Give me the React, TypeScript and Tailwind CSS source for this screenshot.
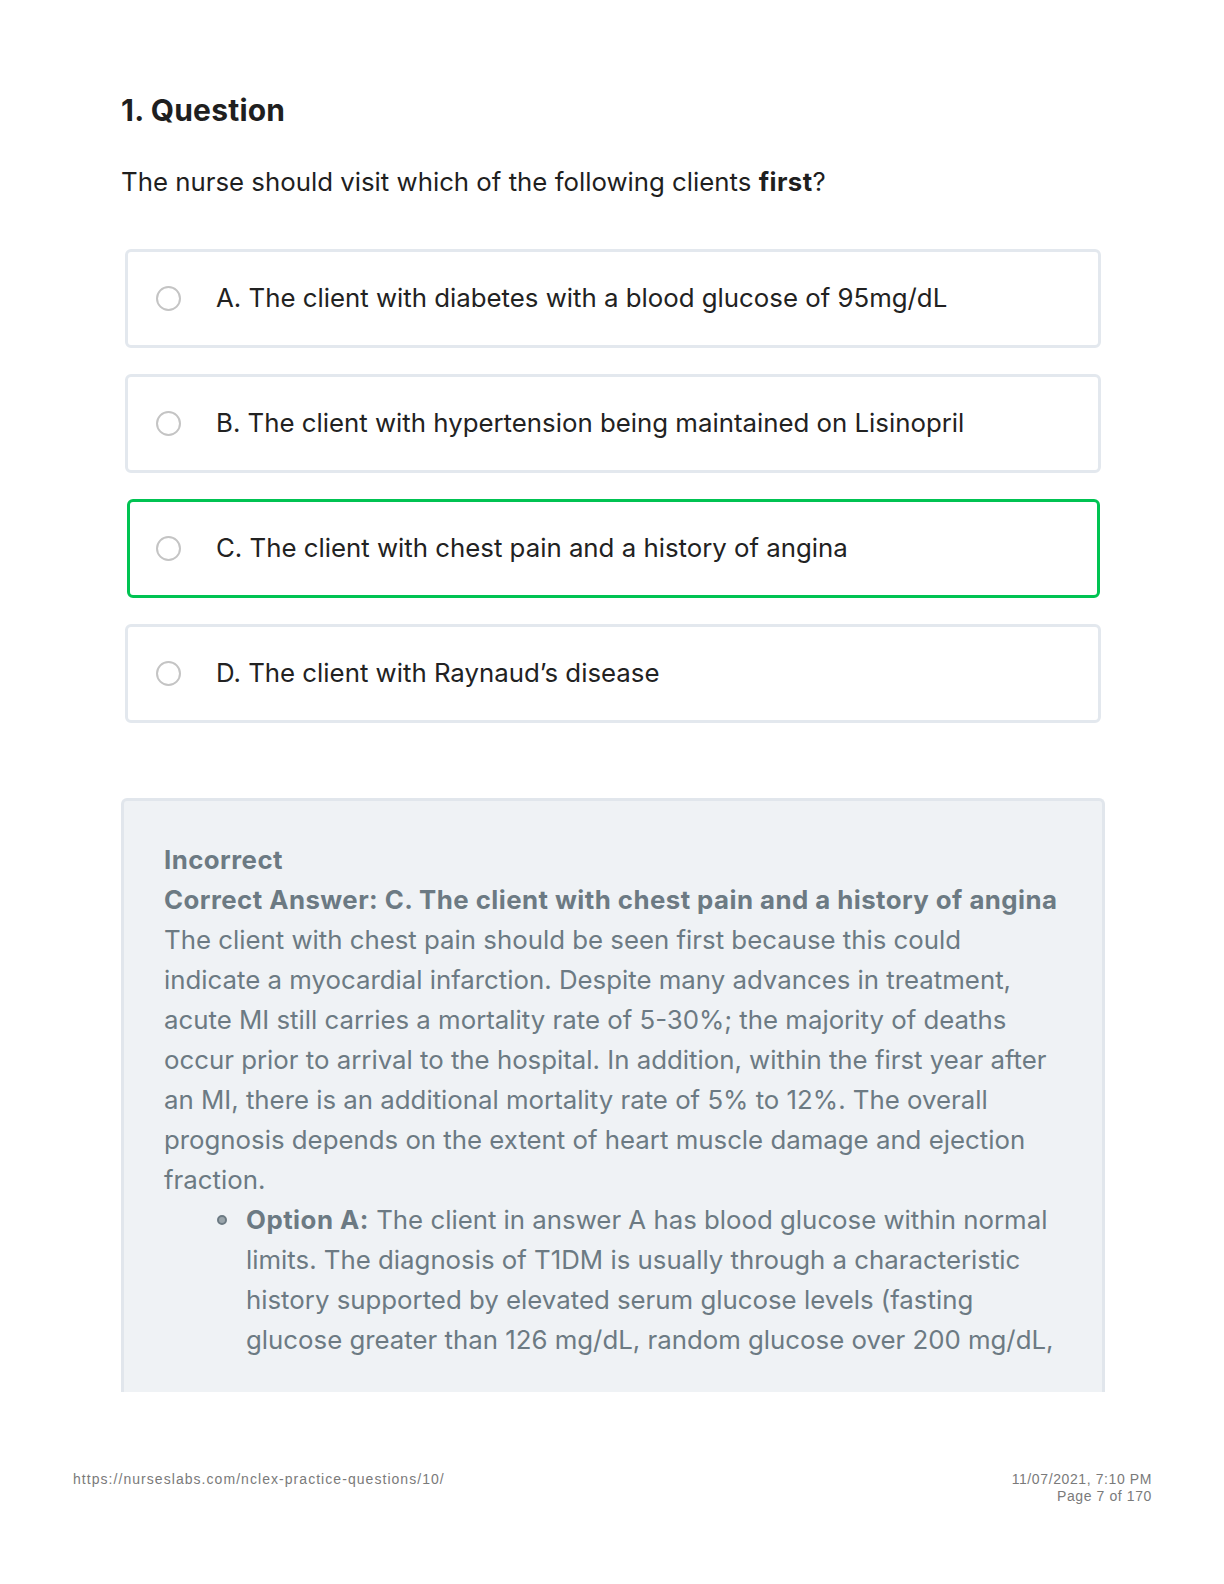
import React from "react";

const options = [
  { id: "A", text: "The client with diabetes with a blood glucose of 95mg/dL" },
  { id: "B", text: "The client with hypertension being maintained on Lisinopril" },
  { id: "C", text: "The client with chest pain and a history of angina", correct: true },
  { id: "D", text: "The client with Raynaud’s disease" },
];

function Option({ id, text, correct }: { id: string; text: string; correct?: boolean }) {
  return (
    <div
      className={
        correct
          ? "ml-[6px] mr-[5px] flex h-[99px] items-center rounded-[6px] border-[3px] border-[#00c352] bg-white pl-[26px]"
          : "ml-[4px] mr-[4px] flex h-[99px] items-center rounded-[6px] border-[3px] border-[#e3e8ee] bg-white pl-[28px]"
      }
    >
      <span className="h-[25px] w-[25px] shrink-0 rounded-full border-2 border-[#c4c4c4] bg-white" />
      <span className="ml-[35px] text-[25.8px] text-[#222]">
        {id}. {text}
      </span>
    </div>
  );
}

export default function App() {
  return (
    <div
      className="relative h-[1584px] w-full overflow-hidden bg-white"
      style={{ fontFamily: "Inter, 'Noto Sans', sans-serif" }}
    >
      <div className="pl-[121px] pt-[91px]">
        <h1 className="text-[30px] font-bold leading-[38px] tracking-[0.2px] text-[#1f1f1f]">1. Question</h1>
        <p className="mt-[36px] text-[25.8px] leading-[34px] text-[#1f1f1f]">
          The nurse should visit which of the following clients <b className="tracking-[0.4px]">first</b>?
        </p>

        <div className="mt-[50px] flex w-[984px] flex-col gap-[26px]">
          {options.map((o) => (
            <Option key={o.id} {...o} />
          ))}
        </div>

        <div className="mt-[75px] h-[594px] w-[984px] overflow-hidden rounded-t-[6px] border-[3px] border-b-0 border-[#e1e6ec] bg-[#eff2f5] px-[40px] pt-[39px] text-[25.8px] leading-[40px] text-[#6c7a83]">
          <p className="font-bold tracking-[0.45px]">Incorrect</p>
          <p className="whitespace-nowrap font-bold tracking-[0.45px]">
            Correct Answer: C. The client with chest pain and a history of angina
          </p>
          <p>
            The client with chest pain should be seen first because this could indicate a myocardial infarction.
            Despite many advances in treatment, acute MI still carries a mortality rate of 5-30%; the majority of
            deaths occur prior to arrival to the hospital. In addition, within the first year after an MI, there is an
            additional mortality rate of 5% to 12%. The overall prognosis depends on the extent of heart muscle damage
            and ejection fraction.
          </p>
          <ul className="pl-[82px]">
            <li className="relative">
              <span className="absolute left-[-29px] top-[15px] h-[10px] w-[10px] rounded-full border-2 border-[#6c7a83] bg-[#9aa5ab]" />
              <b className="tracking-[0.5px]">Option A:</b> The client in answer A has blood glucose within normal
              limits. The diagnosis of T1DM is usually through a characteristic history supported by elevated serum
              glucose levels (fasting glucose greater than 126 mg/dL, random glucose over 200 mg/dL,
            </li>
          </ul>
        </div>
      </div>

      <div
        className="absolute left-[73px] right-[72px] top-[1471px] flex justify-between text-[14px] leading-[17px] text-[#7a7a7a]"
        style={{ fontFamily: "'Liberation Sans', Arial, sans-serif" }}
      >
        <span className="tracking-[1.05px]">https://nurseslabs.com/nclex-practice-questions/10/</span>
        <span className="text-right tracking-[0.6px]">
          11/07/2021, 7:10 PM
          <br />
          Page 7 of 170
        </span>
      </div>
    </div>
  );
}
